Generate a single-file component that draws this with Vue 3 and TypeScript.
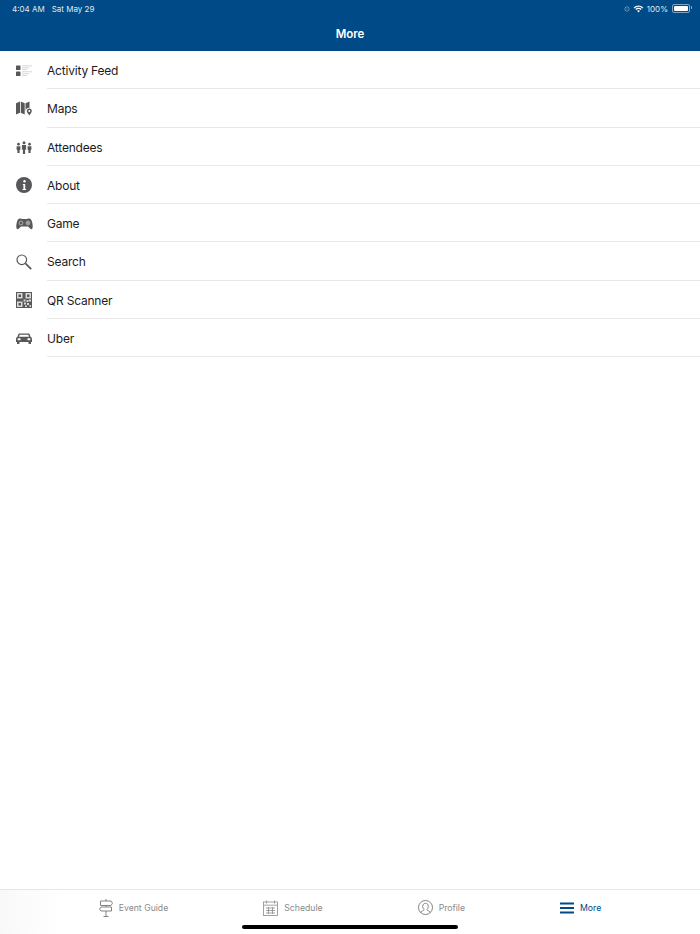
<script setup lang="ts">
const rows = [
  { name: 'Activity Feed', icon: 'feed' },
  { name: 'Maps', icon: 'map' },
  { name: 'Attendees', icon: 'people' },
  { name: 'About', icon: 'info' },
  { name: 'Game', icon: 'game' },
  { name: 'Search', icon: 'search' },
  { name: 'QR Scanner', icon: 'qr' },
  { name: 'Uber', icon: 'car' },
]
</script>

<template>
  <div class="page">
    <header class="top">
      <div class="status">
        <div class="status-left">
          <span>4:04 AM</span>
          <span>Sat May 29</span>
        </div>
        <div class="status-right">
          <svg class="spin" width="6" height="6" viewBox="0 0 8 8" stroke="#fff" stroke-width="1" opacity="0.5">
            <path d="M4 0v2.500M4 5.500V8M0 4h2.500M5.500 4H8M1.200 1.200 3 3M5 5l1.800 1.800M6.800 1.200 5 3M3 5 1.200 6.800" />
          </svg>
          <svg width="11" height="8" viewBox="0 0 11 8" fill="#fff">
            <path d="M5.500 1.800c1.500 0 2.900.6 3.900 1.600l.9-1A7 7 0 0 0 5.500.4 7 7 0 0 0 .7 2.400l.9 1c1-1 2.400-1.600 3.900-1.600z" />
            <path d="M5.500 4c.9 0 1.700.4 2.300.9l.9-1A4.600 4.600 0 0 0 5.500 2.700c-1.200 0-2.400.5-3.200 1.200l.9 1C3.800 4.400 4.600 4 5.500 4z" />
            <path d="M5.500 5.200c-.6 0-1.100.2-1.500.6l1.500 1.700L7 5.800c-.4-.4-.9-.6-1.500-.6z" />
          </svg>
          <span>100%</span>
          <span class="battery"><i></i></span>
        </div>
      </div>
      <h1 class="title">More</h1>
    </header>

    <ul class="list">
      <li v-for="row in rows" :key="row.name" class="row">
        <span class="row-icon">
          <svg v-if="row.icon === 'feed'" width="16" height="12" viewBox="0 0 16 12">
            <rect x="0" y="0.500" width="4.500" height="4.500" rx="0.500" fill="#58585a" />
            <rect x="0" y="6.500" width="4.500" height="4.500" rx="0.500" fill="#58585a" />
            <path d="M6 .8h10M6 2.800h7M6 4.600h5M6 6.800h10M6 8.800h7M6 10.600h5" stroke="#c4c4c6" stroke-width="0.700" />
          </svg>
          <svg v-else-if="row.icon === 'map'" width="17" height="16" viewBox="0 0 17 16" fill="#58585a">
            <path d="M0 2.200 4 .6v11.200l-4 1.700z" />
            <path d="M4.800.6 8.700 2.200v11.300l-3.900-1.700z" />
            <path d="M9.500 2.200 13.500.5v6.300a3.800 3.800 0 0 0-4 3.500z" />
            <path fill-rule="evenodd" d="M13.300 7.600a2.500 2.500 0 0 1 2.500 2.500c0 1.300-1.500 3-2.500 4.400-1-1.400-2.500-3.100-2.500-4.400a2.500 2.500 0 0 1 2.500-2.500zm0 1.500a1 1 0 1 0 0 2 1 1 0 0 0 0-2z" />
          </svg>
          <svg v-else-if="row.icon === 'people'" width="16" height="13" viewBox="0 0 16 13" fill="#58585a">
            <circle cx="2.500" cy="3.200" r="1.400" />
            <path d="M.6 5.200h3.800v3.600l-.8.300V12H1.400V9.100l-.8-.3z" />
            <circle cx="8" cy="1.700" r="1.500" />
            <path d="M5.900 4h4.200v4.400l-1 .4V13H6.900V8.800l-1-.4z" />
            <circle cx="13.500" cy="3.200" r="1.400" />
            <path d="M11.600 5.200h3.800v3.600l-.8.300V12h-2.200V9.100l-.8-.3z" />
          </svg>
          <svg v-else-if="row.icon === 'info'" width="16" height="16" viewBox="0 0 16 16">
            <circle cx="8" cy="8" r="8" fill="#58585a" />
            <circle cx="8.500" cy="4.200" r="1.200" fill="#fff" />
            <path d="M6.800 7h2.400v5h.9v1H6.500v-1h.9V8h-.6z" fill="#fff" />
          </svg>
          <svg v-else-if="row.icon === 'game'" width="17" height="12" viewBox="0 0 17 12">
            <path fill="#58585a" d="M4 .5c1 0 1.700.6 2.500.6h4c.8 0 1.500-.6 2.500-.6 1.700 0 2.600 1.500 3.200 4 .4 1.700.8 4 .3 5.700-.3 1-1.400 1.300-2.200.6L12 8.500H5l-2.300 2.300c-.8.700-1.900.4-2.200-.6C0 8.500.4 6.200.8 4.500 1.400 2 2.300.5 4 .5z" />
            <circle cx="5" cy="5" r="1.900" fill="none" stroke="#fff" stroke-width="0.700" opacity="0.7" />
            <circle cx="12" cy="5" r="1.900" fill="none" stroke="#fff" stroke-width="0.700" opacity="0.7" />
            <circle cx="12" cy="5" r="0.800" fill="#fff" />
          </svg>
          <svg v-else-if="row.icon === 'search'" width="16" height="16" viewBox="0 0 16 16" fill="none" stroke="#58585a">
            <circle cx="5.800" cy="5.800" r="4.800" stroke-width="1.200" />
            <path d="M9.400 9.400 15.200 15.200" stroke-width="1.700" />
          </svg>
          <svg v-else-if="row.icon === 'qr'" width="16" height="16" viewBox="0 0 16 16">
            <rect width="16" height="16" fill="#58585a" />
            <path fill="#d8d8d8" d="M1 1h5.500v5.500H1zM9.500 1H15v5.500H9.500zM1 9.500h5.500V15H1z" />
            <path fill="#58585a" d="M2.500 2.500H5V5H2.500zM11 2.500h2.500V5H11zM2.500 11H5v2.500H2.500z" />
            <path fill="#d8d8d8" d="M7.500 7.500h2v2h-2zM10.500 8h2v2h-2zM13 7.500h2v2h-2zM8 10.500h2v2H8zM11 11h2v2h-2zM13.500 13h1.500v2h-1.500zM9 13.500h2V15H9z" />
          </svg>
          <svg v-else-if="row.icon === 'car'" width="16" height="11" viewBox="0 0 16 11" fill="#58585a">
            <path fill-rule="evenodd" d="M3.400.5h9.200c.6 0 1 .3 1.200.9l.9 2.600c.8.300 1.300 1 1.300 1.900V9h-1v1.400c0 .3-.3.600-.6.600h-1.300c-.3 0-.6-.3-.6-.6V9H3.500v1.400c0 .3-.3.600-.6.600H1.600c-.3 0-.6-.3-.6-.6V9H0V5.900C0 5 .5 4.300 1.300 4l.9-2.600C2.400.8 2.800.5 3.400.5zM3.700 1.800 3 3.800h10l-.7-2zM2.500 5.300a1 1 0 1 0 0 2h1.200a1 1 0 1 0 0-2zm9.800 0a1 1 0 1 0 0 2h1.200a1 1 0 1 0 0-2z" />
          </svg>
        </span>
        <span class="row-label">{{ row.name }}</span>
      </li>
    </ul>

    <nav class="tabs">
      <div class="tab">
        <svg width="14" height="18" viewBox="0 0 14 18" fill="none" stroke="#777" stroke-width="0.900">
          <path d="M7 0v2M7 6.500v1.500M7 12v5.500M4.500 17.500h5" />
          <path d="M1.500 2h10.500l1.500 2.200L12 6.500H1.500zM2 8h10.500v4H2L.5 10z" />
        </svg>
        <span>Event Guide</span>
      </div>
      <div class="tab">
        <svg width="15" height="16" viewBox="0 0 15 16" fill="none" stroke="#8a8a8a" stroke-width="0.800">
          <rect x="0.500" y="2" width="14" height="13.500" />
          <path d="M0.500 5.200h14M3.500 0.500v3M11.500 0.500v3M3 8h9M3 10.500h9M3 13h9M5.500 7v7M9.500 7v7" />
        </svg>
        <span>Schedule</span>
      </div>
      <div class="tab">
        <svg width="15" height="15" viewBox="0 0 15 15" fill="none" stroke="#666" stroke-width="0.800">
          <circle cx="7.500" cy="7.500" r="7" />
          <path d="M2.800 12.700c.3-1.800 2.800-2 3.400-3.100-1-.8-1.500-2-1.500-3.300 0-1.800 1.100-3 2.800-3s2.800 1.200 2.800 3c0 1.300-.5 2.500-1.500 3.300.6 1.100 3.100 1.300 3.400 3.100" />
        </svg>
        <span>Profile</span>
      </div>
      <div class="tab active">
        <svg width="14" height="12" viewBox="0 0 14 12" fill="#004b87">
          <rect y="0.500" width="14" height="2" />
          <rect y="5" width="14" height="2" />
          <rect y="9.500" width="14" height="2" />
        </svg>
        <span>More</span>
      </div>
      <div class="home-bar"></div>
    </nav>
  </div>
</template>

<style scoped>
.page {
  width: 700px;
  height: 934px;
  display: flex;
  flex-direction: column;
  background: #fff;
  font-family: Inter, 'Liberation Sans', sans-serif;
  overflow: hidden;
}

.top {
  height: 51px;
  background: #004b87;
  color: #fff;
  flex-shrink: 0;
}

.status {
  height: 17px;
  padding: 0 10px 0 12px;
  display: flex;
  align-items: center;
  justify-content: space-between;
  font-size: 8px;
  color: rgba(255, 255, 255, 0.9);
}

.status-left {
  display: flex;
  gap: 7px;
}

.status-right {
  display: flex;
  align-items: center;
  gap: 3px;
}

.battery {
  width: 14px;
  height: 5px;
  border: 1px solid rgba(255, 255, 255, 0.5);
  border-radius: 2px;
  padding: 1px;
  display: flex;
  margin-left: 1px;
  position: relative;
}

.battery::after {
  content: '';
  position: absolute;
  right: -3px;
  top: 1px;
  width: 1px;
  height: 3px;
  background: rgba(255, 255, 255, 0.5);
}

.battery i {
  flex: 1;
  background: #fff;
  border-radius: 1px;
}

.title {
  margin: 0;
  height: 34px;
  line-height: 35px;
  text-align: center;
  font-size: 11.500px;
  font-weight: 600;
}

.list {
  list-style: none;
  margin: 0;
  padding: 0;
}

.row {
  height: 38.250px;
  display: flex;
  align-items: center;
}

.row-icon {
  width: 47px;
  flex-shrink: 0;
  display: flex;
  justify-content: center;
  padding: 1px 0 0 1px;
  box-sizing: border-box;
}

.row-label {
  flex: 1;
  height: 100%;
  line-height: 40px;
  font-size: 12px;
  letter-spacing: -0.2px;
  color: #1c1c1e;
  border-bottom: 1px solid #e8e8e8;
  box-sizing: border-box;
}

.tabs {
  margin-top: auto;
  height: 45px;
  box-sizing: border-box;
  border-top: 1px solid #e6e6e6;
  background: linear-gradient(90deg, #f8f8f8 0, #fdfdfd 40px, #fff 60px);
  display: flex;
  justify-content: center;
  gap: 95px;
  padding-bottom: 9px;
  position: relative;
}

.tab {
  display: flex;
  align-items: center;
  gap: 6px;
  font-size: 8.700px;
  color: #8a8a8a;
}

.tab.active {
  color: #004b87;
}

.home-bar {
  position: absolute;
  left: 242px;
  bottom: 5px;
  width: 216px;
  height: 4px;
  border-radius: 2px;
  background: #000;
}
</style>
